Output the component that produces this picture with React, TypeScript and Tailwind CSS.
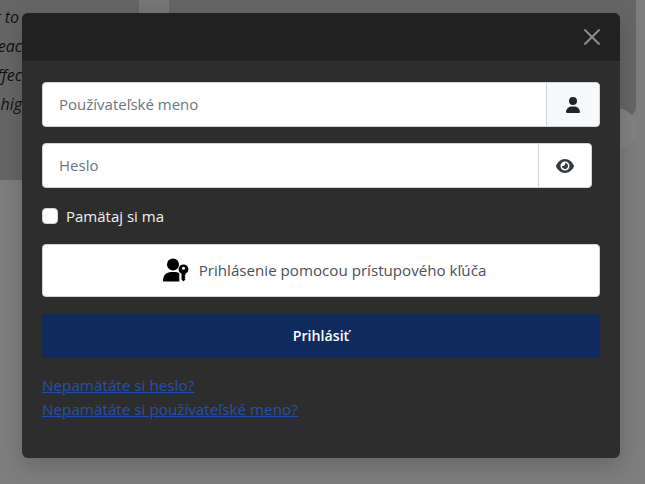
import React from 'react';
import { FaUser, FaEye } from 'react-icons/fa6';

const fontStack = { fontFamily: '"Open Sans", "Noto Sans", sans-serif' };

// person with a key next to it
const PasskeyIcon = () => (
  <svg width="26" height="25" viewBox="0 0 26 25" className="shrink-0">
    <circle cx="10" cy="6.500" r="6" fill="#000" />
    <path d="M1 23.500c-.6 0-1-.4-1-1C0 17.500 3.500 14 8 14h4c1.600 0 3 .4 4.300 1.200V23.500H1z" fill="#000" />
    <path
      fillRule="evenodd"
      d="M20.500 6.500a4.800 4.800 0 0 1 2 9.200V17l-1 1 1 1.200-1 1 1 1.100-2 2.200-2-2V15.700a4.800 4.800 0 0 1 2-9.200zm0 2.300a1.500 1.500 0 1 0 0 3 1.500 1.500 0 0 0 0-3z"
      fill="#000"
    />
  </svg>
);

export default function App() {
  return (
    <div className="relative w-[645px] h-[484px] overflow-hidden bg-[#7e7e7e]" style={fontStack}>
      {/* page behind the dialog */}
      <div className="flex items-start h-[180px]">
        <div className="w-[139px] h-[180px] bg-[#666666] italic text-[16px] leading-[29px] text-[#111] pt-[3px] overflow-hidden whitespace-nowrap">
          <div className="flex justify-end pr-[120px]">r to</div>
          <div className="flex justify-end pr-[117px]">eac</div>
          <div className="flex justify-end pr-[117px]">ffec</div>
          <div className="flex justify-end pr-[117px]">hig</div>
        </div>
        <div className="w-[30px] h-[180px] bg-[#777777]" />
        <div className="w-[467px] h-[118px] bg-[#666666] rounded-br-[12px] italic text-[16px] text-[#111] pl-[43px] pt-[8px] whitespace-nowrap overflow-hidden">
          Health care and teens using a word with the word
        </div>
      </div>
      <div className="absolute left-[595px] top-[108px] w-[42px] h-[42px] rounded-full bg-[#838383]" />

      {/* dialog */}
      <div className="absolute left-[22px] top-[13px] w-[598px] h-[445px] rounded-[6px] bg-[#2d2d2d] overflow-hidden shadow-[0_8px_24px_rgba(0,0,0,0.2)]">
        <div className="h-[49px] bg-[#212121] border-b border-[#333333] flex items-center justify-end pr-[20px]">
          <svg width="16" height="16" viewBox="0 0 16 16">
            <path d="M0.500 0.500L15.500 15.500M15.500 0.500L0.500 15.500" stroke="#8c8c8c" strokeWidth="2" />
          </svg>
        </div>

        <div className="px-[20px] pt-[20px] flex flex-col">
          <div className="flex h-[45px] w-[558px] bg-white rounded-[4px] border border-[#ced4da] overflow-hidden">
            <div className="flex-1 flex items-center pl-[16px] text-[15px] text-[#6c757d]">Používateľské meno</div>
            <div className="w-[53px] flex items-center justify-center bg-[#f8f9fa] border-l border-[#ced4da]">
              <FaUser size={16} color="#212529" />
            </div>
          </div>

          <div className="flex h-[45px] w-[550px] mt-[16px] bg-white rounded-[4px] border border-[#ced4da] overflow-hidden">
            <div className="flex-1 flex items-center pl-[16px] text-[15px] text-[#6c757d]">Heslo</div>
            <div className="w-[53px] flex items-center justify-center border-l border-[#ced4da]">
              <FaEye size={18} color="#343a40" />
            </div>
          </div>

          <label className="flex items-center gap-[8px] mt-[20px] h-[16px] text-[15px] font-medium text-[#f1f1f1]">
            <span className="w-[16px] h-[16px] bg-white rounded-[4px] border border-[#ced4da]" />
            Pamätaj si ma
          </label>

          <button className="flex items-center justify-center gap-[10px] pl-[7px] h-[53px] w-[558px] mt-[20px] bg-white rounded-[4px] border border-[#ced4da] text-[15.15px] text-[#495057]">
            <PasskeyIcon />
            Prihlásenie pomocou prístupového kľúča
          </button>

          <button className="h-[44px] w-[558px] mt-[17px] bg-[#0f2a5c] rounded-[4px] text-[14.2px] font-semibold text-white">
            Prihlásiť
          </button>

          <div className="mt-[15px] flex flex-col items-start text-[15.25px] leading-[24px] text-[#2350b0] underline">
            <a href="#">Nepamätáte si heslo?</a>
            <a href="#">Nepamätáte si používateľské meno?</a>
          </div>
        </div>
      </div>
    </div>
  );
}
